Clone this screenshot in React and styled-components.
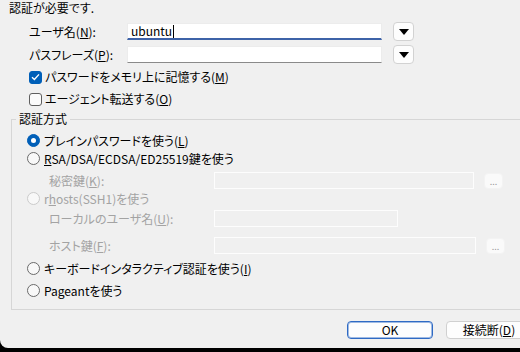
import React from "react";
import styled, { createGlobalStyle } from "styled-components";

const Global = createGlobalStyle`
  html, body { margin: 0; padding: 0; background: #000; }
  body {
    font-family: "Noto Sans CJK JP", "Noto Sans", sans-serif;
    font-size: 12px;
    color: #000;
    font-feature-settings: "palt";
  }
`;

const Root = styled.div`
  width: 520px;
  height: 352px;
  background: #000;
  overflow: hidden;
`;

const Window = styled.div`
  width: 520px;
  height: 348px;
  background: #f0f0f0;
  border-bottom-left-radius: 8px;
  display: flex;
  flex-direction: column;
  overflow: hidden;
`;

const Title = styled.div`
  height: 16px;
  line-height: 16px;
  padding-left: 9px;
`;

const FieldGrid = styled.div`
  display: grid;
  grid-template-columns: 87px 255px 21px;
  grid-auto-rows: 19px;
  column-gap: 11px;
  row-gap: 4px;
  align-items: center;
  padding-left: 29px;
  margin-top: 6px;
`;

const Label = styled.span`
  line-height: 16px;
  white-space: nowrap;
  color: ${(p) => (p.$disabled ? "#a3a3a3" : "#000")};
`;

const U = styled.span`
  text-decoration: underline;
  text-underline-offset: 1px;
  text-decoration-thickness: 1px;
`;

const TextBox = styled.div`
  height: 17px;
  box-sizing: border-box;
  background: #fff;
  border: 1px solid #ececec;
  border-bottom: ${(p) => (p.$focused ? "2px solid #3e63a8" : "1px solid #8a8a8a")};
  display: flex;
  align-items: center;
  padding-left: 3px;
  line-height: 14px;
`;

const Caret = styled.span`
  display: inline-block;
  width: 1px;
  height: 13px;
  background: #000;
  margin-left: 1px;
`;

const DropButton = styled.div`
  width: 21px;
  height: 19px;
  box-sizing: border-box;
  background: #fdfdfd;
  border: 1px solid #d2d2d2;
  border-radius: 4px;
  display: flex;
  align-items: center;
  justify-content: center;
`;

const Checks = styled.div`
  display: flex;
  flex-direction: column;
  gap: 2px;
  margin-top: 3px;
  padding-left: 29px;
`;

const CheckRow = styled.div`
  display: flex;
  align-items: center;
  gap: 3px;
  height: 20px;
`;

const Box = styled.span`
  width: 13px;
  height: 13px;
  box-sizing: border-box;
  border-radius: 3px;
  display: flex;
  align-items: center;
  justify-content: center;
  background: ${(p) => (p.$checked ? "#005fb8" : "#fbfbfb")};
  border: 1px solid ${(p) => (p.$checked ? "#005fb8" : "#5f5f5f")};
`;

const Group = styled.fieldset`
  margin: 2px -20px 0 11px;
  padding: 0;
  border: 1px solid #d6d6d6;
  border-radius: 0;
  min-width: 0;
`;

const Legend = styled.legend`
  margin-left: 4px;
  padding: 0 3px;
  line-height: 16px;
  height: 16px;
`;

const GroupBody = styled.div`
  display: flex;
  flex-direction: column;
  padding: 4px 0 10px 15px;
`;

const RadioRow = styled.div`
  display: flex;
  align-items: center;
  gap: 4px;
  height: 18px;
  margin-top: ${(p) => p.$mt || 0}px;
  color: ${(p) => (p.$disabled ? "#a3a3a3" : "#000")};
  white-space: nowrap;
`;

const Radio = styled.span`
  width: 13px;
  height: 13px;
  box-sizing: border-box;
  border-radius: 50%;
  display: flex;
  align-items: center;
  justify-content: center;
  flex: none;
  background: ${(p) => (p.$checked ? "#005fb8" : "#f8f8f8")};
  border: 1px solid
    ${(p) => (p.$checked ? "#005fb8" : p.$disabled ? "#cbcbcb" : "#6a6a6a")};
  &::after {
    content: "";
    display: ${(p) => (p.$checked ? "block" : "none")};
    width: 5px;
    height: 5px;
    border-radius: 50%;
    background: #fff;
  }
`;

const FieldRow = styled.div`
  display: flex;
  align-items: center;
  height: 17px;
  padding-left: 22px;
  margin-top: ${(p) => p.$mt || 0}px;
`;

const FieldLabel = styled(Label)`
  width: 165px;
  flex: none;
`;

const DisabledBox = styled.div`
  width: ${(p) => p.$w}px;
  height: 17px;
  box-sizing: border-box;
  border: 1px solid #fdfdfd;
  background: #f0f0f0;
  flex: none;
`;

const MoreButton = styled.div`
  width: 19px;
  height: 16px;
  margin-left: 10px;
  box-sizing: border-box;
  background: #fafafa;
  border: 1px solid #f3f3f3;
  border-radius: 4px;
  color: #9a9a9a;
  font-size: 9px;
  line-height: 9px;
  display: flex;
  align-items: flex-end;
  justify-content: center;
  padding-bottom: 2px;
  flex: none;
`;

const Buttons = styled.div`
  display: flex;
  justify-content: flex-end;
  gap: 13px;
  margin: 11px -12px 0 0;
`;

const PushButton = styled.div`
  width: 86px;
  height: 18px;
  box-sizing: border-box;
  border-radius: 4px;
  background: #fdfdfd;
  border: 1px solid ${(p) => (p.$default ? "#2f6ac4" : "#d0d0d0")};
  box-shadow: ${(p) => (p.$default ? "inset 0 0 0 1px rgba(47,106,196,0.45)" : "none")};
  display: flex;
  align-items: center;
  justify-content: center;
  line-height: 16px;
  flex: none;
`;

const Arrow = () => (
  <svg width="10" height="6" viewBox="0 0 10 6">
    <path d="M0 0 H10 L5 6 Z" fill="#000" />
  </svg>
);

const Check = () => (
  <svg width="9" height="8" viewBox="0 0 9 8">
    <path d="M1 4.2 L3.4 6.4 L8 1.4" fill="none" stroke="#fff" strokeWidth="1.4" />
  </svg>
);

export default function App() {
  return (
    <Root>
      <Global />
      <Window>
        <Title>認証が必要です.</Title>
        <FieldGrid>
          <Label>
            ユーザ名(<U>N</U>):
          </Label>
          <TextBox $focused>
            ubuntu
            <Caret />
          </TextBox>
          <DropButton>
            <Arrow />
          </DropButton>
          <Label>
            パスフレーズ(<U>P</U>):
          </Label>
          <TextBox />
          <DropButton>
            <Arrow />
          </DropButton>
        </FieldGrid>
        <Checks>
          <CheckRow>
            <Box $checked>
              <Check />
            </Box>
            <Label>
              パスワードをメモリ上に記憶する(<U>M</U>)
            </Label>
          </CheckRow>
          <CheckRow>
            <Box />
            <Label>
              エージェント転送する(<U>O</U>)
            </Label>
          </CheckRow>
        </Checks>
        <Group>
          <Legend>認証方式</Legend>
          <GroupBody>
            <RadioRow>
              <Radio $checked />
              <span>
                プレインパスワードを使う(<U>L</U>)
              </span>
            </RadioRow>
            <RadioRow>
              <Radio />
              <span>
                <U>R</U>SA/DSA/ECDSA/ED25519鍵を使う
              </span>
            </RadioRow>
            <FieldRow $mt={5}>
              <FieldLabel $disabled>
                秘密鍵(<U>K</U>):
              </FieldLabel>
              <DisabledBox $w={260} />
              <MoreButton>...</MoreButton>
            </FieldRow>
            <RadioRow $disabled>
              <Radio $disabled />
              <span>
                r<U>h</U>osts(SSH1)を使う
              </span>
            </RadioRow>
            <FieldRow $mt={3}>
              <FieldLabel $disabled>
                ローカルのユーザ名(<U>U</U>):
              </FieldLabel>
              <DisabledBox $w={184} />
            </FieldRow>
            <FieldRow $mt={10}>
              <FieldLabel $disabled>
                ホスト鍵(<U>F</U>):
              </FieldLabel>
              <DisabledBox $w={262} />
              <MoreButton>...</MoreButton>
            </FieldRow>
            <RadioRow $mt={5}>
              <Radio />
              <span>
                キーボードインタラクティブ認証を使う(<U>I</U>)
              </span>
            </RadioRow>
            <RadioRow $mt={4}>
              <Radio />
              <span>Pageantを使う</span>
            </RadioRow>
          </GroupBody>
        </Group>
        <Buttons>
          <PushButton $default>OK</PushButton>
          <PushButton>
            接続断(<U>D</U>)
          </PushButton>
        </Buttons>
      </Window>
    </Root>
  );
}
